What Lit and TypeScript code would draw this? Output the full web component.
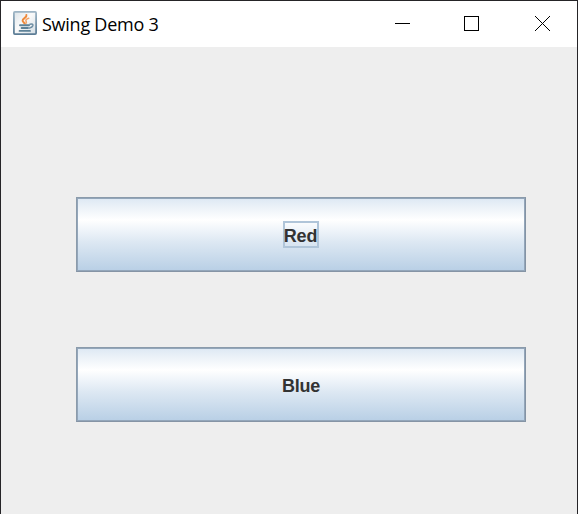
import { LitElement, html, css } from "lit";
import { customElement, property } from "lit/decorators.js";

@customElement("metal-button")
class MetalButton extends LitElement {
  @property() label = "";
  @property({ type: Boolean }) focused = false;
  static styles = css`
    :host { display: block; }
    .button {
      box-sizing: border-box; width: 450px; height: 75px; padding: 1px; margin: 0;
      display: flex; align-items: center; justify-content: center;
      border: 1px solid; border-color: #8b9bab #8493a4 #8594a5 #8b9bab;
      border-radius: 0; outline: none;
      box-shadow: inset 0 0 0 1px #93a6ba;
      background: linear-gradient(#dde8f3 0, #ffffff 30%, #dde8f3 60%, #b8cfe5 100%);
      font: bold 18px/22px "Liberation Sans", Arial, sans-serif; color: #333;
      letter-spacing: -0.2px;
    }
    .label {
      box-sizing: border-box; height: 27px; padding: 2px 0 0;
      border: 2px solid transparent; white-space: nowrap;
      width: 42px; display: flex; justify-content: center;
    }
    .focus { width: 36px; padding-right: 1px; border-color: #b0c5d9; }
  `;
  render() {
    return html`<button class="button">
      <span class="label ${this.focused ? "focus" : ""}">${this.label}</span>
    </button>`;
  }
}

@customElement("app-root")
class AppRoot extends LitElement {
  static styles = css`
    :host { display: block; }
    .window {
      box-sizing: border-box; width: 578px; height: 514px; overflow: hidden;
      border: 1px solid #252427; border-bottom: 0; background: #eee;
      display: flex; flex-direction: column;
    }
    .titlebar { height: 46px; flex: none; display: flex; background: #fff; }
    .icon { display: block; margin: 10px 0 0 12px; }
    .title {
      margin: 10px 0 0 5px; flex: 1; white-space: nowrap;
      font: 18px/26px "Open Sans", "Noto Sans", sans-serif; letter-spacing: -0.25px; color: #000;
    }
    .controls { display: block; flex: none; width: 210px; height: 46px; }
    .content {
      flex: 1; display: flex; flex-direction: column; gap: 75px;
      padding: 150px 0 0 75px;
    }
  `;
  render() {
    return html`<div class="window">
      <div class="titlebar">
        <svg class="icon" width="24" height="24" viewBox="0 0 24 24">
          <defs>
            <linearGradient id="edge" x1="0" y1="0" x2="0" y2="1">
              <stop offset="0" stop-color="#9eb5c5" /><stop offset="1" stop-color="#5b7c95" />
            </linearGradient>
            <linearGradient id="face" x1="0" y1="0" x2="1" y2="1">
              <stop offset="0" stop-color="#dce4e9" /><stop offset=".45" stop-color="#fafafa" /><stop offset="1" stop-color="#d3dde4" />
            </linearGradient>
          </defs>
          <rect x=".9" y=".9" width="22.2" height="22.2" rx="1" fill="url(#face)" stroke="url(#edge)" stroke-width="1.8" />
          <g fill="none" stroke-linecap="round">
            <path d="M13.4 4C14.3 6.7 9.3 7.3 9.6 9.6C9.8 11 11.2 11.4 11.5 12.6" stroke="#ee8a3c" stroke-width="2" />
            <path d="M15.7 7.2C13.5 7.9 12.4 8.8 13.1 10.2C13.7 11.2 13.3 12 12.7 12.8" stroke="#f3a366" stroke-width="1.6" />
            <path d="M7 14.3H16M8.6 17H15M6.6 19.9H17" stroke="#5e8298" stroke-width="1.9" />
            <path d="M17 13.2Q20.4 12.4 19.8 14.8Q19.2 16.5 16.6 17" stroke="#6f8fa4" stroke-width="1.6" />
          </g>
        </svg>
        <div class="title">Swing Demo 3</div>
        <svg class="controls" viewBox="0 0 210 46" fill="none" stroke="#000">
          <path d="M28 22.5H43" />
          <rect x="97.5" y="15.5" width="14" height="14" />
          <path d="M168 15L183 30M183 15L168 30" />
        </svg>
      </div>
      <div class="content">
        <metal-button label="Red" focused></metal-button>
        <metal-button label="Blue"></metal-button>
      </div>
    </div>`;
  }
}
